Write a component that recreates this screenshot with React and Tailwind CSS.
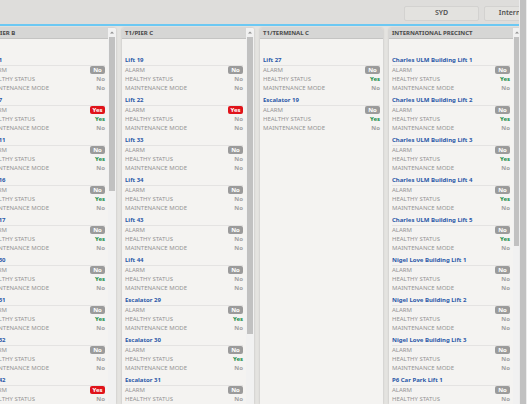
import React from "react";

const columns = [
  {
    title: "T1/PIER B",
    thumb: "h-[154px]",
    items: [
      ["Lift 1", "No", "No"],
      ["Lift 7", "Yes", "Yes"],
      ["Lift 11", "No", "Yes"],
      ["Lift 16", "No", "Yes"],
      ["Lift 17", "No", "Yes"],
      ["Lift 30", "No", "Yes"],
      ["Lift 31", "No", "Yes"],
      ["Lift 32", "No", "No"],
      ["Lift 42", "Yes", "No"],
    ],
  },
  {
    title: "T1/PIER C",
    thumb: "h-[297px]",
    items: [
      ["Lift 19", "No", "No"],
      ["Lift 22", "Yes", "No"],
      ["Lift 33", "No", "No"],
      ["Lift 34", "No", "No"],
      ["Lift 43", "No", "No"],
      ["Lift 44", "No", "No"],
      ["Escalator 29", "No", "Yes"],
      ["Escalator 30", "No", "Yes"],
      ["Escalator 31", "No", "No"],
    ],
  },
  {
    title: "T1/TERMINAL C",
    items: [
      ["Lift 27", "No", "Yes"],
      ["Escalator 19", "No", "Yes"],
    ],
  },
  {
    title: "INTERNATIONAL PRECINCT",
    thumb: "h-[209px]",
    items: [
      ["Charles ULM Building Lift 1", "No", "Yes"],
      ["Charles ULM Building Lift 2", "No", "Yes"],
      ["Charles ULM Building Lift 3", "No", "Yes"],
      ["Charles ULM Building Lift 4", "No", "Yes"],
      ["Charles ULM Building Lift 5", "No", "Yes"],
      ["Nigel Love Building Lift 1", "No", "No"],
      ["Nigel Love Building Lift 2", "No", "No"],
      ["Nigel Love Building Lift 3", "No", "No"],
      ["P6 Car Park Lift 1", "No", "No"],
    ],
  },
];

function Badge({ value }) {
  const color = value === "Yes" ? "bg-[#e0131a]" : "bg-[#9b9b9b]";
  return (
    <dd className={`w-[15px] rounded-[2px] text-center font-bold leading-[8px] text-white ${color}`}>
      {value}
    </dd>
  );
}

function Value({ value }) {
  const color = value === "Yes" ? "text-[#168c48]" : "text-[#a0a0a0]";
  return <dd className={`font-bold ${color}`}>{value}</dd>;
}

function Asset({ name, alarm, healthy }) {
  return (
    <section className="mb-[3px]">
      <h3 className="border-b border-[#e4e3e2] font-bold leading-[9px] text-[#2a58a8]">{name}</h3>
      <dl className="leading-[9px] text-[#949494]">
        <div className="flex items-start justify-between">
          <dt>ALARM</dt>
          <Badge value={alarm} />
        </div>
        <div className="flex justify-between">
          <dt>HEALTHY STATUS</dt>
          <Value value={healthy} />
        </div>
        <div className="flex justify-between">
          <dt>MAINTENANCE MODE</dt>
          <Value value="No" />
        </div>
      </dl>
    </section>
  );
}

function Scrollbar({ thumb }) {
  return (
    <div className="flex w-2 shrink-0 flex-col items-center bg-[#f1f1f1]" aria-hidden="true">
      <div className="flex h-[9px] shrink-0 items-center">
        <svg width="4" height="3" viewBox="0 0 4 3">
          <path d="M2 0.4 L4 2.6 H0 Z" fill="#8f8f8f" />
        </svg>
      </div>
      <div className={`w-[6px] bg-[#c1c1c1] ${thumb}`} />
    </div>
  );
}

function Column({ title, thumb, items }) {
  return (
    <section className="flex shrink-0 overflow-hidden rounded-t-[2px] bg-[#f4f3f1] shadow-[0_0_2px_#b4b3b1]">
      <div className={thumb ? "w-[124px]" : "w-[123px]"}>
        <h2 className="border-b border-[#c4c4c3] bg-[#d6d6d5] px-[3px] font-bold leading-[10px] text-[#4a4a4a]">
          {title}
        </h2>
        <div className="px-[3px] pt-[17px]">
          {items.map(([name, alarm, healthy]) => (
            <Asset key={name} name={name} alarm={alarm} healthy={healthy} />
          ))}
        </div>
      </div>
      {thumb && <Scrollbar thumb={thumb} />}
    </section>
  );
}

function NavButton({ children }) {
  return (
    <button
      type="button"
      className="h-[15px] w-[75px] shrink-0 rounded-[2px] border border-[#d3d2d0] bg-[#e3e2df] text-[7px] font-semibold text-[#505050]"
    >
      {children}
    </button>
  );
}

export default function App() {
  return (
    <div className="flex h-screen overflow-hidden bg-[#e4e3e0] font-['Noto_Sans','Open_Sans',sans-serif] text-[6px]">
      <div className="flex min-w-0 flex-1 flex-col overflow-hidden">
        <header className="flex h-[26px] shrink-0 items-center justify-end gap-[5px] overflow-hidden border-b-2 border-[#6cc8f3] bg-[#dedddb] pt-[2px]">
          <NavButton>SYD</NavButton>
          <div className="w-[35px] shrink-0">
            <NavButton>International</NavButton>
          </div>
        </header>
        <main className="-ml-4 flex min-h-0 flex-1 gap-[6px] pt-[2px]">
          {columns.map((column) => (
            <Column key={column.title} {...column} />
          ))}
        </main>
      </div>
      <div className="w-[8px] shrink-0 border-x border-[#ececec] bg-[#c1c1c1]" aria-hidden="true" />
    </div>
  );
}
